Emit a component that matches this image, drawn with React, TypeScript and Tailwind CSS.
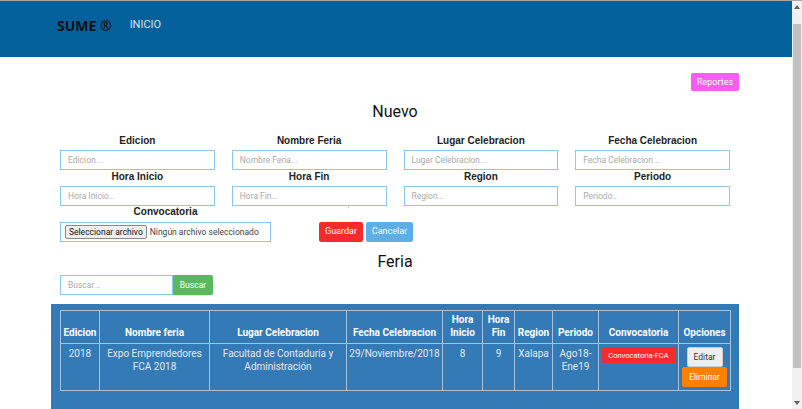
import React from 'react';

const fields = [
  { label: 'Edicion', ph: 'Edicion...' },
  { label: 'Nombre Feria', ph: 'Nombre Feria...' },
  { label: 'Lugar Celebracion', ph: 'Lugar Celebracion...' },
  { label: 'Fecha Celebracion', ph: 'Fecha Celebracion...' },
  { label: 'Hora Inicio', ph: 'Hora Inicio...' },
  { label: 'Hora Fin', ph: 'Hora Fin...' },
  { label: 'Region', ph: 'Region...' },
  { label: 'Periodo', ph: 'Periodo..' },
];

const cols = [
  { title: ['Edicion'], w: 39 },
  { title: ['Nombre feria'], w: 110 },
  { title: ['Lugar Celebracion'], w: 137 },
  { title: ['Fecha Celebracion'], w: 96 },
  { title: ['Hora', 'Inicio'], w: 40 },
  { title: ['Hora', 'Fin'], w: 32 },
  { title: ['Region'], w: 38 },
  { title: ['Periodo'], w: 46 },
  { title: ['Convocatoria'], w: 80 },
  { title: ['Opciones'], w: 52 },
];

const App = () => {
  return (
    <div className="flex h-[409px] w-[802px] overflow-hidden border-t border-[#a8a8a8] bg-white font-['Roboto',sans-serif]">
      <div className="flex-1 flex flex-col overflow-hidden">
        {/* navbar */}
        <nav className="shrink-0 h-[56px] bg-[#04609b] flex items-center pl-[57px] pb-[8px]">
          <span className="text-[14px] font-bold text-[#111] font-['Open_Sans',sans-serif]">SUME ®</span>
          <span className="ml-[18px] text-[11px] text-[#d8e4f0]">INICIO</span>
        </nav>

        <div className="shrink-0 w-[670px] mx-auto -translate-x-[1px] flex flex-col">
          <div className="flex justify-end pt-[16px] -mr-[9px]">
            <button className="h-[18px] w-[48px] rounded-[2px] bg-[#fa5cf2] text-white text-[9px] leading-none">Reportes</button>
          </div>

          <h2 className="mt-[11px] text-center text-[16px] leading-[20px] text-[#111]">Nuevo</h2>

          <div className="mt-[12px] grid grid-cols-4 gap-x-[17px]">
            {fields.map(f => (
              <div key={f.label} className="flex flex-col">
                <label className="text-center text-[10px] leading-[14px] font-bold text-[#222] font-['Liberation_Sans',sans-serif]">{f.label}</label>
                <div className="mt-[2px] h-[20px] border border-[#8bc9e8] flex items-center pl-[7px] text-[8.5px] text-[#aaa]">{f.ph}</div>
              </div>
            ))}
          </div>

          <div className="flex">
            <div className="w-[211px] flex flex-col">
              <label className="text-center text-[10px] leading-[12px] font-bold text-[#222] font-['Liberation_Sans',sans-serif]">Convocatoria</label>
              <div className="mt-[4px] h-[20px] border border-[#8bc9e8] flex items-center pl-[4px] text-[8.5px] text-[#444]">
                <span className="h-[14px] px-[3px] flex items-center border border-[#8a8a8a] bg-[#eeeeee] rounded-[2px] text-[#111]">Seleccionar archivo</span>
                <span className="ml-[3px]">Ningún archivo seleccionado</span>
              </div>
            </div>
            <div className="ml-[48px] flex flex-col">
              <span className="h-[16px] pl-[28px] text-[8px] leading-[8px] text-[#333]">ˈ</span>
              <div className="flex gap-[3px]">
                <button className="h-[20px] w-[44px] rounded-[2px] bg-[#f72b2b] text-white text-[9px]">Guardar</button>
                <button className="h-[20px] w-[47px] rounded-[2px] bg-[#5dade6] text-white text-[9px]">Cancelar</button>
              </div>
            </div>
          </div>

          <h2 className="mt-[10px] text-center text-[16px] leading-[20px] text-[#111]">Feria</h2>

          <div className="mt-[3px] flex h-[20px]">
            <div className="w-[113px] border border-[#8bc9e8] flex items-center pl-[7px] text-[8.5px] text-[#aaa]">Buscar...</div>
            <button className="w-[40px] rounded-r-[2px] bg-[#5cb85c] text-white text-[8.5px]">Buscar</button>
          </div>

          <div className="mt-[9px] -mx-[9px] bg-[#337ab7] px-[9px] pt-[6px] pb-[24px]">
            <table className="table-fixed border-collapse w-[670px] text-[10px] text-[#e2ebf4]">
              <colgroup>
                {cols.map(c => <col key={c.title.join()} style={{ width: c.w }} />)}
              </colgroup>
              <thead>
                <tr className="h-[33px]">
                  {cols.map(c => (
                    <th key={c.title.join()} className="border border-[#a9c3de] align-bottom pb-[4px] px-0 text-center font-bold text-white leading-[13px]">
                      {c.title.map(t => <div key={t}>{t}</div>)}
                    </th>
                  ))}
                </tr>
              </thead>
              <tbody>
                <tr className="h-[46px] leading-[13px] text-center align-top">
                  <td className="border border-[#a9c3de] pt-[3px]">2018</td>
                  <td className="border border-[#a9c3de] pt-[3px]">Expo Emprendedores<br />FCA 2018</td>
                  <td className="border border-[#a9c3de] pt-[3px]">Facultad de Contaduría y<br />Administración</td>
                  <td className="border border-[#a9c3de] pt-[3px]">29/Noviembre/2018</td>
                  <td className="border border-[#a9c3de] pt-[3px]">8</td>
                  <td className="border border-[#a9c3de] pt-[3px]">9</td>
                  <td className="border border-[#a9c3de] pt-[3px]">Xalapa</td>
                  <td className="border border-[#a9c3de] pt-[3px]">Ago18-<br />Ene19</td>
                  <td className="border border-[#a9c3de] pt-[3px]">
                    <div className="flex justify-center">
                      <span className="h-[16px] w-[74px] rounded-[2px] bg-[#f72b2b] text-white text-[7.5px] flex items-center justify-center">Convocatoria-FCA</span>
                    </div>
                  </td>
                  <td className="border border-[#a9c3de] pt-[3px] pb-[3px]">
                    <div className="flex flex-col items-center">
                      <span className="h-[20px] w-[36px] rounded-[2px] bg-[#eeeeee] border border-[#ccc] text-[#333] text-[8.5px] flex items-center justify-center">Editar</span>
                      <span className="h-[20px] w-[45px] rounded-[2px] bg-[#ff8000] text-white text-[8.5px] flex items-center justify-center">Eliminar</span>
                    </div>
                  </td>
                </tr>
              </tbody>
            </table>
          </div>
        </div>
      </div>

      {/* scrollbar */}
      <div className="w-[10px] shrink-0 bg-[#f0f0f0] flex flex-col items-center">
        <div className="h-[23px] shrink-0 flex items-start justify-center pt-[4px]">
          <svg width="6" height="4" viewBox="0 0 6 4"><path d="M0 4 L3 0 L6 4 Z" fill="#606060" /></svg>
        </div>
        <div className="h-[344px] w-[8px] shrink-0 bg-[#c1c1c1]" />
        <div className="flex-1 flex items-end justify-center pb-[4px]">
          <svg width="6" height="4" viewBox="0 0 6 4"><path d="M0 0 L3 4 L6 0 Z" fill="#606060" /></svg>
        </div>
      </div>
    </div>
  );
};

export default App;
